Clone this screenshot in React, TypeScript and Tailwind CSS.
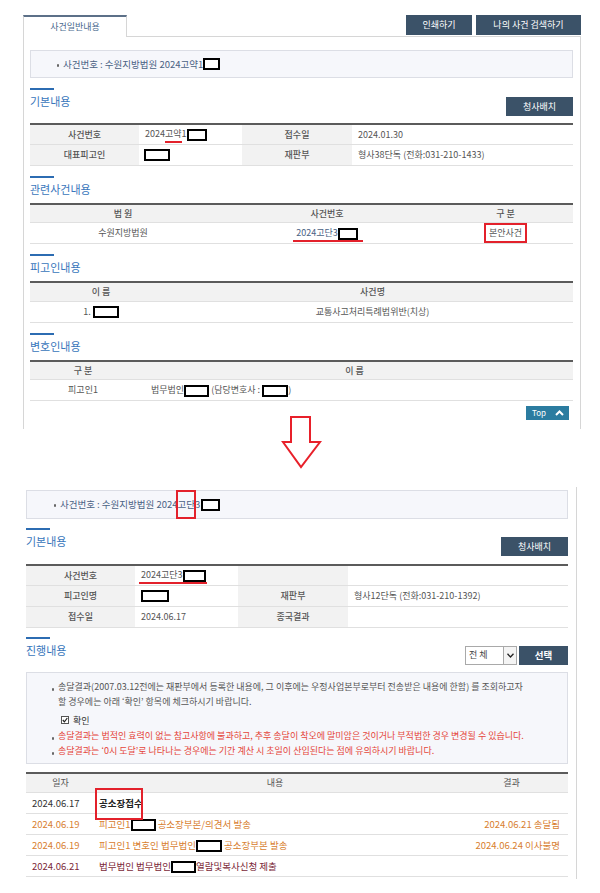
import React from 'react';

type BoxProps = { className?: string };

// black redaction boxes drawn over names / numbers
const Redact: React.FC<BoxProps> = ({ className = 'w-[20px]' }) => (
  <span className={`inline-block h-[12px] border-2 border-black bg-white align-middle ${className}`} />
);

const Bullet = () => (
  <span className="mr-[4px] inline-block h-[3px] w-[2px] translate-y-[1px] rounded-[1px] bg-[#666]" />
);

const SectionHead: React.FC<{ title: string; children?: React.ReactNode }> = ({ title, children }) => (
  <div>
    <div className="h-[2px] w-[24px] bg-[#2c6cb2]" />
    <div className="flex items-start justify-between">
      <h3 className="pt-[2px] text-[11px] leading-[18px] text-[#3876bb]">{title}</h3>
      {children}
    </div>
  </div>
);

const DarkButton: React.FC<{ label: string }> = ({ label }) => (
  <button className="mt-[7px] h-[19px] w-[67px] bg-[#3b5268] text-[9px] text-white">{label}</button>
);

const th = 'bg-[#f2f2f2] text-center font-medium text-[#555]';
const row = 'border-b border-[#e0e0e0]';

const App: React.FC = () => {
  return (
    <div className="min-h-[893px] w-[600px] bg-white font-['Noto_Sans_CJK_KR',sans-serif] text-[9px] text-[#555]">
      {/* ---------- first capture ---------- */}
      <div className="w-[581px] pl-[23px] pt-[15px]">
        <div className="flex items-end">
          <div className="h-[22px] w-[104px] border-x border-t-2 border-x-[#d6d6d6] border-t-[#5c7088] bg-white text-center text-[9px] leading-[19px] text-[#4a6a8e]">
            사건일반내용
          </div>
          <div className="flex flex-1 justify-end gap-[4px] border-b border-[#d6d6d6] pb-[1px]">
            <button className="h-[20px] w-[66px] bg-[#3b5268] text-[9px] text-white">인쇄하기</button>
            <button className="h-[20px] w-[105px] bg-[#3b5268] text-[9px] text-white">나의 사건 검색하기</button>
          </div>
        </div>

        <div className="border-x border-[#d6d6d6] pb-[9px] pl-[6px] pr-[7px] pt-[13px]">
          <div className="flex h-[28px] items-center border border-[#dcdee5] bg-[#f6f7fb] pl-[26px] text-[9.5px] text-[#4a6284]">
            <Bullet />
            <span>사건번호 : 수원지방법원 2024고약1</span>
            <Redact className="w-[17px]" />
          </div>

          {/* 기본내용 */}
          <div className="mt-[10px]">
            <SectionHead title="기본내용">
              <DarkButton label="청사배치" />
            </SectionHead>
            <table className="mt-[7px] w-full table-fixed border-collapse border-t-2 border-[#5b5b5b]">
              <colgroup>
                <col className="w-[109px]" />
                <col className="w-[103px]" />
                <col className="w-[110px]" />
                <col />
              </colgroup>
              <tbody>
                <tr className={`h-[20px] ${row}`}>
                  <td className={th}>사건번호</td>
                  <td className="pl-[6px]">
                    2024
                    <span className="relative">
                      고약
                      <span className="absolute -bottom-[3px] left-0 right-0 h-[2px] bg-[#e3212b]" />
                    </span>
                    1<Redact className="w-[20px]" />
                  </td>
                  <td className={th}>접수일</td>
                  <td className="pl-[6px]">2024.01.30</td>
                </tr>
                <tr className={`h-[21px] ${row}`}>
                  <td className={th}>대표피고인</td>
                  <td className="pl-[5px]">
                    <Redact className="w-[26px]" />
                  </td>
                  <td className={th}>재판부</td>
                  <td className="pl-[6px]">형사38단독 (전화:031-210-1433)</td>
                </tr>
              </tbody>
            </table>
          </div>

          {/* 관련사건내용 */}
          <div className="mt-[10px]">
            <SectionHead title="관련사건내용" />
            <table className="mt-[5px] w-full table-fixed border-collapse border-t-2 border-[#5b5b5b] text-center">
              <colgroup>
                <col className="w-[186px]" />
                <col className="w-[222px]" />
                <col />
              </colgroup>
              <tbody>
                <tr className={`h-[19px] ${row}`}>
                  <td className={th}>법 원</td>
                  <td className={th}>사건번호</td>
                  <td className={th}>구 분</td>
                </tr>
                <tr className={`h-[21px] ${row}`}>
                  <td>수원지방법원</td>
                  <td>
                    <span className="relative text-[#4a6284]">
                      2024고단3
                      <Redact className="w-[20px]" />
                      <span className="absolute -bottom-[3px] -left-[3px] -right-[5px] h-[2px] bg-[#e3212b]" />
                    </span>
                  </td>
                  <td>
                    <span className="inline-block border-2 border-[#e3212b] px-[3px] leading-[16px]">본안사건</span>
                  </td>
                </tr>
              </tbody>
            </table>
          </div>

          {/* 피고인내용 */}
          <div className="mt-[10px]">
            <SectionHead title="피고인내용" />
            <table className="mt-[5px] w-full table-fixed border-collapse border-t-2 border-[#5b5b5b] text-center">
              <colgroup>
                <col className="w-[142px]" />
                <col />
              </colgroup>
              <tbody>
                <tr className={`h-[19px] ${row}`}>
                  <td className={th}>이 름</td>
                  <td className={th}>사건명</td>
                </tr>
                <tr className={`h-[21px] ${row}`}>
                  <td>
                    1. <Redact className="w-[26px]" />
                  </td>
                  <td>교통사고처리특례법위반(치상)</td>
                </tr>
              </tbody>
            </table>
          </div>

          {/* 변호인내용 */}
          <div className="mt-[10px]">
            <SectionHead title="변호인내용" />
            <table className="mt-[5px] w-full table-fixed border-collapse border-t-2 border-[#5b5b5b]">
              <colgroup>
                <col className="w-[106px]" />
                <col />
              </colgroup>
              <tbody>
                <tr className={`h-[19px] ${row}`}>
                  <td className={th}>구 분</td>
                  <td className={th}>이 름</td>
                </tr>
                <tr className={`h-[21px] ${row}`}>
                  <td className="text-center">피고인1</td>
                  <td className="pl-[15px]">
                    법무법인<Redact className="w-[25px]" /> (담당변호사 : <Redact className="w-[26px]" />)
                  </td>
                </tr>
              </tbody>
            </table>
          </div>

          <div className="mt-[5px] flex justify-end pr-[4px]">
            <button className="flex h-[14px] w-[43px] items-center justify-between bg-[#2b7ca0] pl-[6px] pr-[5px] text-[8px] text-white">
              <span>Top</span>
              <svg width="9" height="6" viewBox="0 0 9 6">
                <path d="M1 5 L4.5 1.5 L8 5" fill="none" stroke="white" strokeWidth="2" />
              </svg>
            </button>
          </div>
        </div>
      </div>

      {/* ---------- arrow ---------- */}
      <div className="relative z-10 -mt-[14px] pl-[281px]">
        <svg width="41" height="54" viewBox="0 0 41 54">
          <path d="M10 2 H29 V27 H39 L20 52 L2 27 H10 Z" fill="white" stroke="#e8202a" strokeWidth="2" />
        </svg>
      </div>

      {/* ---------- second capture ---------- */}
      <div className="ml-[20px] mt-[18px] w-[557px] border-r border-[#d6d6d6] pb-[2px] pl-[6px] pr-[8px] pt-[3px]">
        <div className="flex h-[29px] items-center border border-[#dcdee5] bg-[#f6f7fb] pl-[27px] text-[9.5px] text-[#4a6284]">
          <Bullet />
          <span>사건번호 : 수원지방법원 2024</span>
          <span className="relative">
            고단
            <span className="absolute -bottom-[7px] -left-[2px] -right-[1px] -top-[7px] border-2 border-[#e3212b]" />
          </span>
          <span>3</span>
          <Redact className="ml-[1px] w-[19px]" />
        </div>

        {/* 기본내용 */}
        <div className="mt-[9px]">
          <SectionHead title="기본내용">
            <DarkButton label="청사배치" />
          </SectionHead>
          <table className="mt-[8px] w-full table-fixed border-collapse border-t-2 border-[#5b5b5b]">
            <colgroup>
              <col className="w-[109px]" />
              <col className="w-[103px]" />
              <col className="w-[110px]" />
              <col />
            </colgroup>
            <tbody>
              <tr className={`h-[20px] ${row}`}>
                <td className={th}>사건번호</td>
                <td className="pl-[6px]">
                  <span className="relative">
                    2024고단3
                    <Redact className="w-[23px]" />
                    <span className="absolute -bottom-[3px] -left-[2px] -right-[1px] h-[2px] bg-[#e3212b]" />
                  </span>
                </td>
                <td className={th} />
                <td />
              </tr>
              <tr className={`h-[21px] ${row}`}>
                <td className={th}>피고인명</td>
                <td className="pl-[6px]">
                  <Redact className="w-[28px]" />
                </td>
                <td className={th}>재판부</td>
                <td className="pl-[6px]">형사12단독 (전화:031-210-1392)</td>
              </tr>
              <tr className={`h-[21px] ${row}`}>
                <td className={th}>접수일</td>
                <td className="pl-[6px]">2024.06.17</td>
                <td className={th}>종국결과</td>
                <td />
              </tr>
            </tbody>
          </table>
        </div>

        {/* 진행내용 */}
        <div className="mt-[9px]">
          <SectionHead title="진행내용">
            <div className="mt-[7px] flex h-[19px] gap-[2px]">
              <div className="flex w-[52px] items-center justify-between border border-[#a9a9a9] bg-white pl-[3px] text-[9px] text-[#444]">
                <span>전 체</span>
                <span className="flex h-full w-[13px] items-center justify-center border-l border-[#a9a9a9] bg-[#f4f4f4]">
                  <svg width="7" height="5" viewBox="0 0 7 5">
                    <path d="M0.5 0.8 L3.5 4 L6.5 0.8" fill="none" stroke="#222" strokeWidth="1.3" />
                  </svg>
                </span>
              </div>
              <button className="h-[19px] w-[49px] bg-[#3b5268] text-[9.5px] font-bold text-white">선택</button>
            </div>
          </SectionHead>

          <div className="mt-[7px] h-[92px] border border-[#dcdee5] bg-[#f6f7fb] pl-[25px] pt-[6px] text-[9px] leading-[15px]">
            <div className="whitespace-nowrap">
              <Bullet />
              송달결과(2007.03.12전에는 재판부에서 등록한 내용에, 그 이후에는 우정사업본부로부터 전송받은 내용에 한함) 를 조회하고자
            </div>
            <div className="whitespace-nowrap pl-[6px]">할 경우에는 아래 ‘확인’ 항목에 체크하시기 바랍니다.</div>
            <div className="mt-[4px] flex items-center gap-[4px] pl-[9px] text-[#333]">
              <span className="flex h-[8px] w-[8px] items-center justify-center border border-[#555] bg-white">
                <svg width="6" height="6" viewBox="0 0 6 6">
                  <path d="M0.8 3 L2.4 4.8 L5.3 1" fill="none" stroke="#222" strokeWidth="1.2" />
                </svg>
              </span>
              확인
            </div>
            <div className="whitespace-nowrap text-[#e5453a]">
              <Bullet />
              송달결과는 법적인 효력이 없는 참고사항에 불과하고, 추후 송달이 착오에 말미암은 것이거나 부적법한 경우 변경될 수 있습니다.
            </div>
            <div className="whitespace-nowrap text-[#e5453a]">
              <Bullet />
              송달결과는 ‘0시 도달’로 나타나는 경우에는 기간 계산 시 초일이 산입된다는 점에 유의하시기 바랍니다.
            </div>
          </div>

          <div className="relative mt-[8px]">
            <table className="w-full table-fixed border-collapse border-t-2 border-[#5b5b5b] text-[9.5px]">
              <colgroup>
                <col className="w-[69px]" />
                <col className="w-[360px]" />
                <col />
              </colgroup>
              <tbody>
                <tr className={`h-[20px] ${row}`}>
                  <td className="bg-[#f2f2f2] text-center text-[9px] text-[#555]">일자</td>
                  <td className="bg-[#f2f2f2] text-center text-[9px] text-[#555]">내용</td>
                  <td className="bg-[#f2f2f2] text-center text-[9px] text-[#555]">결과</td>
                </tr>
                <tr className={`h-[21px] ${row} text-[#333]`}>
                  <td className="pl-[6px]">2024.06.17</td>
                  <td className="pl-[4px] font-bold text-[#222]">공소장접수</td>
                  <td />
                </tr>
                <tr className={`h-[21px] ${row} text-[#d8802f]`}>
                  <td className="pl-[6px]">2024.06.19</td>
                  <td className="pl-[4px]">
                    피고인1<Redact className="w-[25px]" /> 공소장부본/의견서 발송
                  </td>
                  <td className="pr-[8px] text-right">2024.06.21 송달됨</td>
                </tr>
                <tr className={`h-[21px] ${row} text-[#d8802f]`}>
                  <td className="pl-[6px]">2024.06.19</td>
                  <td className="pl-[4px]">
                    피고인1 변호인 법무법인<Redact className="w-[26px]" /> 공소장부본 발송
                  </td>
                  <td className="pr-[8px] text-right">2024.06.24 이사불명</td>
                </tr>
                <tr className={`h-[21px] ${row} text-[#7b2838]`}>
                  <td className="pl-[6px]">2024.06.21</td>
                  <td className="pl-[4px]">
                    법무법인 법무법인<Redact className="w-[25px]" />열람및복사신청 제출
                  </td>
                  <td />
                </tr>
              </tbody>
            </table>
            {/* red annotation box over 공소장접수 */}
            <div className="absolute left-[69px] top-[16px] h-[32px] w-[48px] border-2 border-[#e3212b]" />
          </div>
        </div>
      </div>
    </div>
  );
};

export default App;
